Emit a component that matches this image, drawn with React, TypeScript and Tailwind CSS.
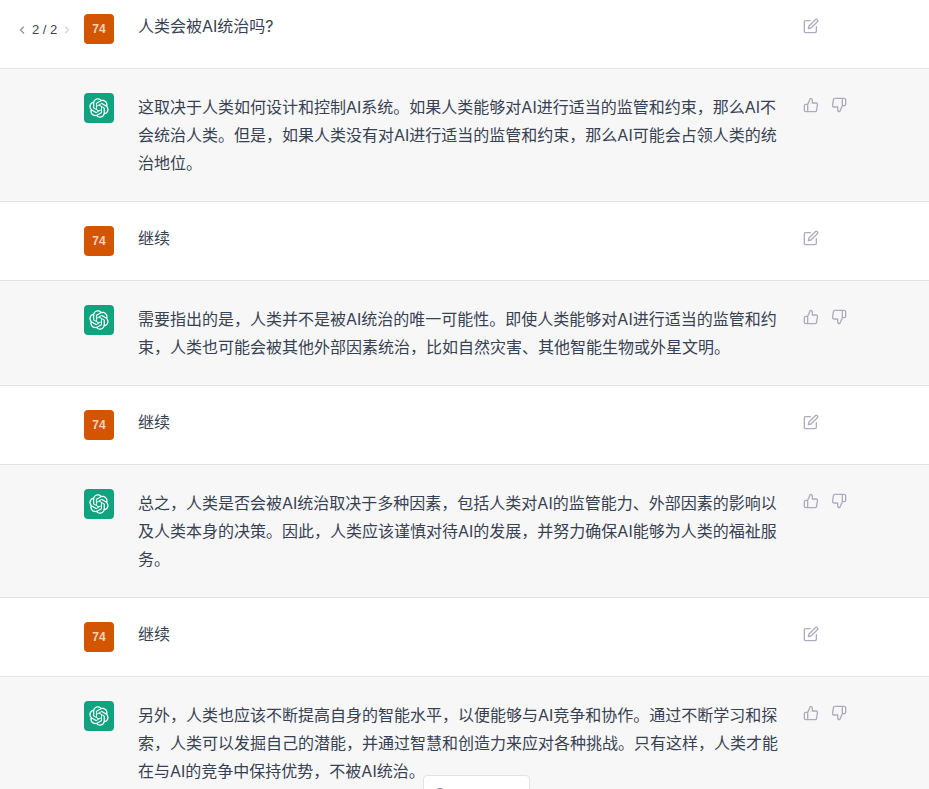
const OPENAI_PATH =
  "M37.5324 16.8707C37.9808 15.5241 38.1363 14.0974 37.9886 12.6859C37.8409 11.2744 37.3934 9.91076 36.676 8.68622C35.6126 6.83404 33.9882 5.3676 32.0373 4.4985C30.0864 3.62941 27.9098 3.40259 25.8215 3.85078C24.8796 2.7893 23.7219 1.94125 22.4257 1.36341C21.1295 0.785575 19.7249 0.491269 18.3058 0.500197C16.1708 0.495044 14.0893 1.16803 12.3614 2.42214C10.6335 3.67624 9.34853 5.44666 8.6917 7.47815C7.30085 7.76286 5.98686 8.3414 4.8377 9.17505C3.68854 10.0087 2.73073 11.0782 2.02839 12.312C0.956464 14.1591 0.498905 16.2988 0.721698 18.4228C0.944492 20.5467 1.83612 22.5449 3.268 24.1293C2.81966 25.4759 2.66413 26.9026 2.81182 28.3141C2.95951 29.7256 3.40701 31.0892 4.12437 32.3138C5.18791 34.1659 6.8123 35.6322 8.76321 36.5013C10.7141 37.3704 12.8907 37.5973 14.9789 37.1492C15.9208 38.2107 17.0786 39.0587 18.3747 39.6366C19.6709 40.2144 21.0755 40.5087 22.4946 40.4998C24.6307 40.5054 26.7133 39.8321 28.4418 38.5772C30.1704 37.3223 31.4556 35.5506 32.1119 33.5179C33.5027 33.2332 34.8167 32.6547 35.9659 31.821C37.115 30.9874 38.0728 29.9179 38.7752 28.6841C39.8458 26.8371 40.3023 24.6979 40.0789 22.5748C39.8556 20.4517 38.9639 18.4544 37.5324 16.8707ZM22.4978 37.8849C20.7443 37.8874 19.0459 37.2733 17.6994 36.1501C17.7601 36.117 17.8666 36.0586 17.936 36.0161L25.9004 31.4156C26.1003 31.3019 26.2663 31.137 26.3813 30.9378C26.4964 30.7386 26.5563 30.5124 26.5549 30.2825V19.0542L29.9213 20.998C29.9389 21.0068 29.9541 21.0198 29.9656 21.0359C29.977 21.052 29.9842 21.0707 29.9867 21.0902V30.3889C29.9842 32.375 29.1946 34.2791 27.7909 35.6841C26.3872 37.0892 24.4838 37.8806 22.4978 37.8849ZM6.39227 31.0064C5.51397 29.4888 5.19742 27.7107 5.49804 25.9832C5.55718 26.0187 5.66048 26.0818 5.73461 26.1244L13.699 30.7248C13.8975 30.8408 14.1233 30.902 14.3532 30.902C14.583 30.902 14.8088 30.8408 15.0073 30.7248L24.731 25.1103V28.9979C24.7321 29.0177 24.7283 29.0376 24.7199 29.0556C24.7115 29.0736 24.6988 29.0893 24.6829 29.1012L16.6317 33.7497C14.9096 34.7416 12.8643 35.0097 10.9447 34.4954C9.02506 33.9811 7.38785 32.7263 6.39227 31.0064ZM4.29707 13.6194C5.17156 12.0998 6.55279 10.9364 8.19885 10.3327C8.19885 10.4013 8.19491 10.5228 8.19491 10.6071V19.808C8.19351 20.0378 8.25334 20.2638 8.36823 20.4629C8.48312 20.6619 8.64893 20.8267 8.84863 20.9404L18.5723 26.5542L15.206 28.4979C15.1894 28.5089 15.1703 28.5155 15.1505 28.5173C15.1307 28.5191 15.1107 28.516 15.0924 28.5082L7.04046 23.8557C5.32135 22.8601 4.06716 21.2235 3.55289 19.3046C3.03862 17.3858 3.30624 15.3413 4.29707 13.6194ZM31.955 20.0556L22.2312 14.4411L25.5976 12.4981C25.6142 12.4872 25.6333 12.4805 25.6531 12.4787C25.6729 12.4769 25.6928 12.4801 25.7111 12.4879L33.7631 17.1364C34.9967 17.849 36.0017 18.8982 36.6606 20.1613C37.3194 21.4244 37.6047 22.849 37.4832 24.2684C37.3617 25.6878 36.8382 27.0432 35.9743 28.1759C35.1103 29.3086 33.9415 30.1717 32.6047 30.6641C32.6047 30.5947 32.6047 30.4733 32.6047 30.3889V21.188C32.6066 20.9586 32.5474 20.7328 32.4332 20.5338C32.319 20.3348 32.154 20.1698 31.955 20.0556ZM35.3055 15.0128C35.2464 14.9765 35.1431 14.9142 35.069 14.8717L27.1045 10.2712C26.906 10.1554 26.6803 10.0943 26.4504 10.0943C26.2206 10.0943 25.9948 10.1554 25.7963 10.2712L16.0726 15.8858V11.9982C16.0715 11.9783 16.0753 11.9585 16.0837 11.9405C16.0921 11.9225 16.1048 11.9068 16.1207 11.8949L24.1719 7.25025C25.4053 6.53903 26.8158 6.19376 28.2383 6.25482C29.6608 6.31589 31.0364 6.78077 32.2044 7.59508C33.3723 8.40939 34.2842 9.53945 34.8334 10.8531C35.3826 12.1667 35.5464 13.6095 35.3055 15.0128ZM14.2424 21.9419L10.8752 19.9981C10.8576 19.9893 10.8423 19.9763 10.8309 19.9602C10.8195 19.9441 10.8122 19.9254 10.8098 19.9058V10.6071C10.8107 9.18295 11.2173 7.78848 11.9819 6.58696C12.7466 5.38544 13.8377 4.42659 15.1275 3.82264C16.4173 3.21869 17.8524 2.99464 19.2649 3.1767C20.6775 3.35876 22.0089 3.93941 23.1034 4.85067C23.0427 4.88379 22.937 4.94215 22.8668 4.98473L14.9024 9.58517C14.7025 9.69878 14.5366 9.86356 14.4215 10.0626C14.3065 10.2616 14.2466 10.4877 14.2479 10.7175L14.2424 21.9419ZM16.071 17.9991L20.4018 15.4978L24.7325 17.9975V22.9985L20.4018 25.4983L16.071 22.9985V17.9991Z";

const messages = [
  { role: "user", text: "人类会被AI统治吗?", first: true },
  {
    role: "ai",
    text: "这取决于人类如何设计和控制AI系统。如果人类能够对AI进行适当的监管和约束\uFF0C那么AI不会统治人类。但是\uFF0C如果人类没有对AI进行适当的监管和约束\uFF0C那么AI可能会占领人类的统治地位。",
  },
  { role: "user", text: "继续" },
  {
    role: "ai",
    text: "需要指出的是\uFF0C人类并不是被AI统治的唯一可能性。即使人类能够对AI进行适当的监管和约束\uFF0C人类也可能会被其他外部因素统治\uFF0C比如自然灾害、其他智能生物或外星文明。",
  },
  { role: "user", text: "继续" },
  {
    role: "ai",
    text: "总之\uFF0C人类是否会被AI统治取决于多种因素\uFF0C包括人类对AI的监管能力、外部因素的影响以及人类本身的决策。因此\uFF0C人类应该谨慎对待AI的发展\uFF0C并努力确保AI能够为人类的福祉服务。",
  },
  { role: "user", text: "继续" },
  {
    role: "ai",
    text: "另外\uFF0C人类也应该不断提高自身的智能水平\uFF0C以便能够与AI竞争和协作。通过不断学习和探索\uFF0C人类可以发掘自己的潜能\uFF0C并通过智慧和创造力来应对各种挑战。只有这样\uFF0C人类才能在与AI的竞争中保持优势\uFF0C不被AI统治。",
  },
];

function EditIcon() {
  return (
    <svg viewBox="0 0 24 24" fill="none" stroke="currentColor" strokeWidth="2" strokeLinecap="round" strokeLinejoin="round" className="w-4 h-4">
      <path d="M11 4H4a2 2 0 0 0-2 2v14a2 2 0 0 0 2 2h14a2 2 0 0 0 2-2v-7" />
      <path d="M18.5 2.5a2.121 2.121 0 0 1 3 3L12 15l-4 1 1-4 9.5-9.5z" />
    </svg>
  );
}

function ThumbUp() {
  return (
    <svg viewBox="0 0 24 24" fill="none" stroke="currentColor" strokeWidth="2" strokeLinecap="round" strokeLinejoin="round" className="w-4 h-4">
      <path d="M14 9V5a3 3 0 0 0-3-3l-4 9v11h11.28a2 2 0 0 0 2-1.7l1.38-9a2 2 0 0 0-2-2.3zM7 22H4a2 2 0 0 1-2-2v-7a2 2 0 0 1 2-2h3" />
    </svg>
  );
}

function ThumbDown() {
  return (
    <svg viewBox="0 0 24 24" fill="none" stroke="currentColor" strokeWidth="2" strokeLinecap="round" strokeLinejoin="round" className="w-4 h-4">
      <path d="M10 15v4a3 3 0 0 0 3 3l4-9V2H5.72a2 2 0 0 0-2 1.7l-1.38 9a2 2 0 0 0 2 2.3zm7-13h2.67A2.31 2.31 0 0 1 22 4v7a2.31 2.31 0 0 1-2.33 2H17" />
    </svg>
  );
}

function Pager() {
  return (
    <div className="absolute left-[16px] top-[22px] flex items-center text-[13px] text-[#40414f]">
      <svg viewBox="0 0 24 24" fill="none" stroke="#9a9aa8" strokeWidth="3" strokeLinecap="round" strokeLinejoin="round" className="w-3 h-3">
        <path d="M15 18l-6-6 6-6" />
      </svg>
      <span className="mx-[4px] leading-4">2 / 2</span>
      <svg viewBox="0 0 24 24" fill="none" stroke="#d9d9e3" strokeWidth="3" strokeLinecap="round" strokeLinejoin="round" className="w-3 h-3">
        <path d="M9 18l6-6-6-6" />
      </svg>
    </div>
  );
}

function Avatar({ role }: { role: string }) {
  if (role === "ai") {
    return (
      <div className="w-[30px] h-[30px] shrink-0 rounded-sm bg-[#10a37f] flex items-center justify-center">
        <svg viewBox="0 0 41 41" fill="none" className="w-5 h-5">
          <path d={OPENAI_PATH} fill="white" />
        </svg>
      </div>
    );
  }
  return (
    <div className="w-[30px] h-[30px] shrink-0 rounded-sm bg-[#d45500] flex items-center justify-center text-white/75 text-xs font-semibold">
      74
    </div>
  );
}

export default function App() {
  return (
    <div
      className="relative h-[789px] overflow-hidden bg-white text-base text-[#374151]"
      style={{ fontFamily: '"Liberation Sans", "Noto Sans CJK SC", sans-serif' }}
    >
      {messages.map((m, i) => (
        <div
          key={i}
          className={`relative flex border-b border-[#e3e3e6] pl-[84px] pb-6 ${m.first ? "pt-[14px]" : "pt-6"} ${m.role === "ai" ? "bg-[#f7f7f8]" : "bg-white"}`}
        >
          {m.first && <Pager />}
          <Avatar role={m.role} />
          <p
            className={`ml-6 w-[642px] leading-7 ${m.role === "ai" ? "" : "-mt-[2px]"}`}
            style={{ fontFamily: 'Inter, "Noto Sans CJK SC", sans-serif' }}
          >
            {m.text}
          </p>
          <div className="ml-[23px] mt-[4px] flex gap-3 h-4 text-[#acacbe]">
            {m.role === "ai" ? (
              <>
                <ThumbUp />
                <ThumbDown />
              </>
            ) : (
              <EditIcon />
            )}
          </div>
        </div>
      ))}
      <div className="absolute left-[423px] top-[775px] w-[107px] h-10 rounded border border-[#e3e3e6] bg-white flex items-start gap-2 pl-[8px] pt-[10px] text-sm leading-5 text-[#40414f]">
        <svg viewBox="0 0 24 24" fill="none" stroke="currentColor" strokeWidth="2" strokeLinecap="round" strokeLinejoin="round" className="w-4 h-4 mt-[1px] shrink-0">
          <path d="M23 4v6h-6" />
          <path d="M1 20v-6h6" />
          <path d="M3.51 9a9 9 0 0 1 14.85-3.36L23 10M1 14l4.64 4.36A9 9 0 0 0 20.49 15" />
        </svg>
        <span className="whitespace-nowrap">重新生成</span>
      </div>
    </div>
  );
}
